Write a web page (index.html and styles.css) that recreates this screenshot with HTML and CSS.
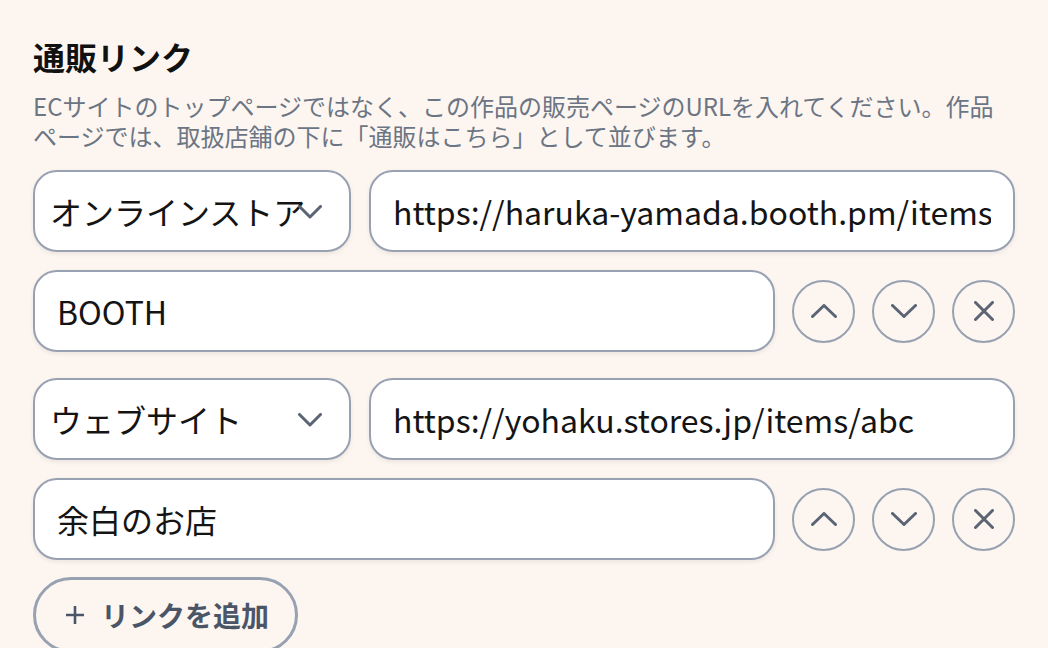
FILE: index.html
```html
<!DOCTYPE html>
<html lang="ja">
<head>
<meta charset="utf-8">
<title>通販リンク</title>
<link rel="stylesheet" href="styles.css">
</head>
<body>
<main class="section">
  <h2 class="title">通販リンク</h2>
  <p class="desc">ECサイトのトップページではなく、この作品の販売ページのURLを入れてください。作品ページでは、取扱店舗の下に「通販はこちら」として並びます。</p>

  <div class="links">
    <div class="link-group">
      <div class="row">
        <div class="select-wrap">
          <select class="select"><option>オンラインストア</option></select>
          <svg class="select-chevron" width="24" height="14" viewBox="0 0 24 14"><path d="M1.5 1.5 L12 12 L22.5 1.5" fill="none" stroke="#5b6474" stroke-width="3" stroke-linecap="round" stroke-linejoin="round"/></svg>
        </div>
        <input class="field url" type="text" value="https://haruka-yamada.booth.pm/items/4821937">
      </div>
      <div class="row">
        <input class="field name" type="text" value="BOOTH">
        <button class="circle" aria-label="上へ"><svg width="26" height="14" viewBox="0 0 26 14"><path d="M1.5 12.5 L13 1.5 L24.5 12.5" fill="none" stroke="#5b6474" stroke-width="3" stroke-linecap="round" stroke-linejoin="round"/></svg></button>
        <button class="circle" aria-label="下へ"><svg width="26" height="14" viewBox="0 0 26 14"><path d="M1.5 1.5 L13 12.5 L24.5 1.5" fill="none" stroke="#5b6474" stroke-width="3" stroke-linecap="round" stroke-linejoin="round"/></svg></button>
        <button class="circle" aria-label="削除"><svg width="20" height="20" viewBox="0 0 20 20"><path d="M1.5 1.5 L18.5 18.5 M18.5 1.5 L1.5 18.5" fill="none" stroke="#5b6474" stroke-width="3" stroke-linecap="round"/></svg></button>
      </div>
    </div>

    <div class="link-group">
      <div class="row">
        <div class="select-wrap">
          <select class="select"><option>ウェブサイト</option></select>
          <svg class="select-chevron" width="24" height="14" viewBox="0 0 24 14"><path d="M1.5 1.5 L12 12 L22.5 1.5" fill="none" stroke="#5b6474" stroke-width="3" stroke-linecap="round" stroke-linejoin="round"/></svg>
        </div>
        <input class="field url" type="text" value="https://yohaku.stores.jp/items/abc">
      </div>
      <div class="row">
        <input class="field name" type="text" value="余白のお店">
        <button class="circle" aria-label="上へ"><svg width="26" height="14" viewBox="0 0 26 14"><path d="M1.5 12.5 L13 1.5 L24.5 12.5" fill="none" stroke="#5b6474" stroke-width="3" stroke-linecap="round" stroke-linejoin="round"/></svg></button>
        <button class="circle" aria-label="下へ"><svg width="26" height="14" viewBox="0 0 26 14"><path d="M1.5 1.5 L13 12.5 L24.5 1.5" fill="none" stroke="#5b6474" stroke-width="3" stroke-linecap="round" stroke-linejoin="round"/></svg></button>
        <button class="circle" aria-label="削除"><svg width="20" height="20" viewBox="0 0 20 20"><path d="M1.5 1.5 L18.5 18.5 M18.5 1.5 L1.5 18.5" fill="none" stroke="#5b6474" stroke-width="3" stroke-linecap="round"/></svg></button>
      </div>
    </div>
  </div>

  <button class="add"><svg width="20" height="20" viewBox="0 0 20 20"><path d="M10 1 V19 M1 10 H19" fill="none" stroke="#4a5567" stroke-width="2.6"/></svg><span>リンクを追加</span></button>
</main>
</body>
</html>
```

FILE: styles.css
```css
* {
  box-sizing: border-box;
}

html, body {
  margin: 0;
  background: #fdf6f0;
}

body {
  font-family: "Noto Sans CJK JP", "Noto Sans", sans-serif;
  color: #141414;
}

.section {
  padding: 36px 33px 0 33px;
}

.title {
  margin: 0;
  font-size: 32px;
  line-height: 40px;
  font-weight: 700;
  color: #111111;
}

.desc {
  margin: 15px 0 19px 0;
  font-size: 24px;
  line-height: 30px;
  color: #6b7584;
}

.links {
  display: flex;
  flex-direction: column;
  gap: 26px;
}

.link-group {
  display: flex;
  flex-direction: column;
  gap: 18px;
}

.row {
  display: flex;
  align-items: center;
  gap: 18px;
}

.row + .row {
  gap: 17px;
}

.select-wrap {
  position: relative;
  flex: 0 0 318px;
  height: 82px;
}

.select {
  -webkit-appearance: none;
  appearance: none;
  width: 100%;
  height: 100%;
  margin: 0;
  padding: 0 10px 0 15px;
  border: 2px solid #98a1b1;
  border-radius: 24px;
  background: #ffffff;
  box-shadow: 0 2px 4px rgba(30, 30, 40, 0.08);
  font-family: inherit;
  font-size: 32px;
  color: #141414;
  outline: none;
}

.select-chevron {
  position: absolute;
  right: 29px;
  top: 50%;
  margin-top: -6px;
  pointer-events: none;
}

.field {
  height: 82px;
  margin: 0;
  padding: 0 22px;
  border: 2px solid #98a1b1;
  border-radius: 24px;
  background: #ffffff;
  box-shadow: 0 2px 4px rgba(30, 30, 40, 0.08);
  font-family: inherit;
  font-size: 32px;
  color: #141414;
  outline: none;
  min-width: 0;
}

.url {
  flex: 1 1 auto;
}

.name {
  flex: 1 1 auto;
}

.circle {
  flex: 0 0 63px;
  width: 63px;
  height: 63px;
  padding: 0;
  margin: 0;
  border: 2px solid #98a1b1;
  border-radius: 50%;
  background: transparent;
  display: flex;
  align-items: center;
  justify-content: center;
}

.add {
  margin: 17px 0 0 0;
  height: 76px;
  padding: 0 26px 0 29px;
  border: 3px solid #98a1b1;
  border-radius: 999px;
  background: transparent;
  display: inline-flex;
  align-items: center;
  gap: 16px;
  font-family: inherit;
  font-size: 28px;
  font-weight: 700;
  color: #4a5567;
}

.add span {
  line-height: 1;
}
```
